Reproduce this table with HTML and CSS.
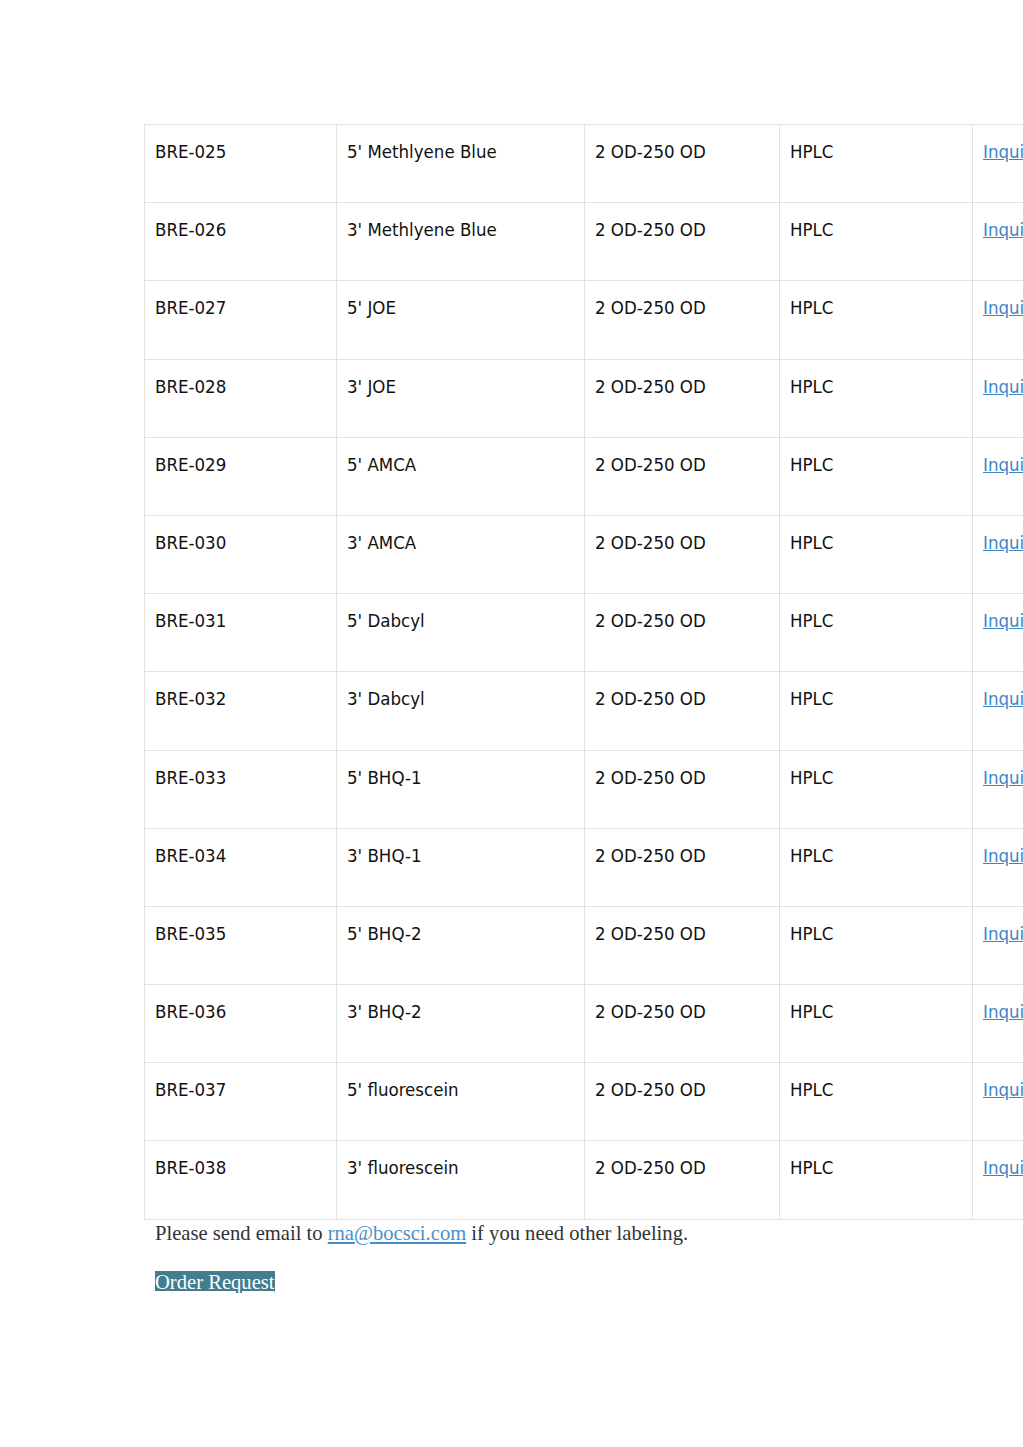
FILE: index.html
```html
<!DOCTYPE html>
<html>
<head>
<meta charset="utf-8">
<link rel="stylesheet" href="styles.css">
</head>
<body>
<div class="page">
  <table class="grid">
    <colgroup>
      <col class="c1"><col class="c2"><col class="c3"><col class="c4"><col class="c5">
    </colgroup>
    <tbody>
      <tr><td>BRE-025</td><td>5' Methlyene Blue</td><td>2 OD-250 OD</td><td>HPLC</td><td><a href="#">Inquiry</a></td></tr>
      <tr><td>BRE-026</td><td>3' Methlyene Blue</td><td>2 OD-250 OD</td><td>HPLC</td><td><a href="#">Inquiry</a></td></tr>
      <tr><td>BRE-027</td><td>5' JOE</td><td>2 OD-250 OD</td><td>HPLC</td><td><a href="#">Inquiry</a></td></tr>
      <tr><td>BRE-028</td><td>3' JOE</td><td>2 OD-250 OD</td><td>HPLC</td><td><a href="#">Inquiry</a></td></tr>
      <tr><td>BRE-029</td><td>5' AMCA</td><td>2 OD-250 OD</td><td>HPLC</td><td><a href="#">Inquiry</a></td></tr>
      <tr><td>BRE-030</td><td>3' AMCA</td><td>2 OD-250 OD</td><td>HPLC</td><td><a href="#">Inquiry</a></td></tr>
      <tr><td>BRE-031</td><td>5' Dabcyl</td><td>2 OD-250 OD</td><td>HPLC</td><td><a href="#">Inquiry</a></td></tr>
      <tr><td>BRE-032</td><td>3' Dabcyl</td><td>2 OD-250 OD</td><td>HPLC</td><td><a href="#">Inquiry</a></td></tr>
      <tr><td>BRE-033</td><td>5' BHQ-1</td><td>2 OD-250 OD</td><td>HPLC</td><td><a href="#">Inquiry</a></td></tr>
      <tr><td>BRE-034</td><td>3' BHQ-1</td><td>2 OD-250 OD</td><td>HPLC</td><td><a href="#">Inquiry</a></td></tr>
      <tr><td>BRE-035</td><td>5' BHQ-2</td><td>2 OD-250 OD</td><td>HPLC</td><td><a href="#">Inquiry</a></td></tr>
      <tr><td>BRE-036</td><td>3' BHQ-2</td><td>2 OD-250 OD</td><td>HPLC</td><td><a href="#">Inquiry</a></td></tr>
      <tr><td>BRE-037</td><td>5' fluorescein</td><td>2 OD-250 OD</td><td>HPLC</td><td><a href="#">Inquiry</a></td></tr>
      <tr><td>BRE-038</td><td>3' fluorescein</td><td>2 OD-250 OD</td><td>HPLC</td><td><a href="#">Inquiry</a></td></tr>
    </tbody>
  </table>
  <p class="note">Please send email to <a href="#">rna@bocsci.com</a> if you need other labeling.</p>
  <p class="order"><a href="#">Order Request</a></p>
</div>
</body>
</html>
```
FILE: styles.css
```css
html, body {
  margin: 0;
  padding: 0;
  background: #fff;
  overflow: hidden;
}
.page {
  padding: 124px 0 0 144px;
  width: 1100px;
}
.grid {
  border-collapse: collapse;
  table-layout: fixed;
  width: 950px;
  font-family: "DejaVu Sans Condensed", "DejaVu Sans", sans-serif;
  font-size: 18.5px;
  color: #111;
}
.c1 { width: 192px; }
.c2 { width: 248px; }
.c3 { width: 195px; }
.c4 { width: 193px; }
.c5 { width: 122px; }
.grid td {
  border: 1.5px solid #e2e2e2;
  height: 78.2px;
  box-sizing: border-box;
  padding: 16px 10px 0 10px;
  vertical-align: top;
  line-height: 22px;
  white-space: nowrap;
}
.grid a {
  color: #3d86c6;
  text-decoration: underline;
}
.note {
  margin: 0;
  padding-left: 11px;
  font-family: "Liberation Serif", serif;
  font-size: 20.6px;
  line-height: 26px;
  color: #333;
}
.note a {
  color: #4a8fc8;
}
.order {
  margin: 24px 0 0 0;
  padding-left: 11px;
  font-family: "Liberation Serif", serif;
  font-size: 20.6px;
  line-height: 25px;
}
.order a {
  background: #437d8f;
  color: #fff;
  text-decoration: underline;
}
```
